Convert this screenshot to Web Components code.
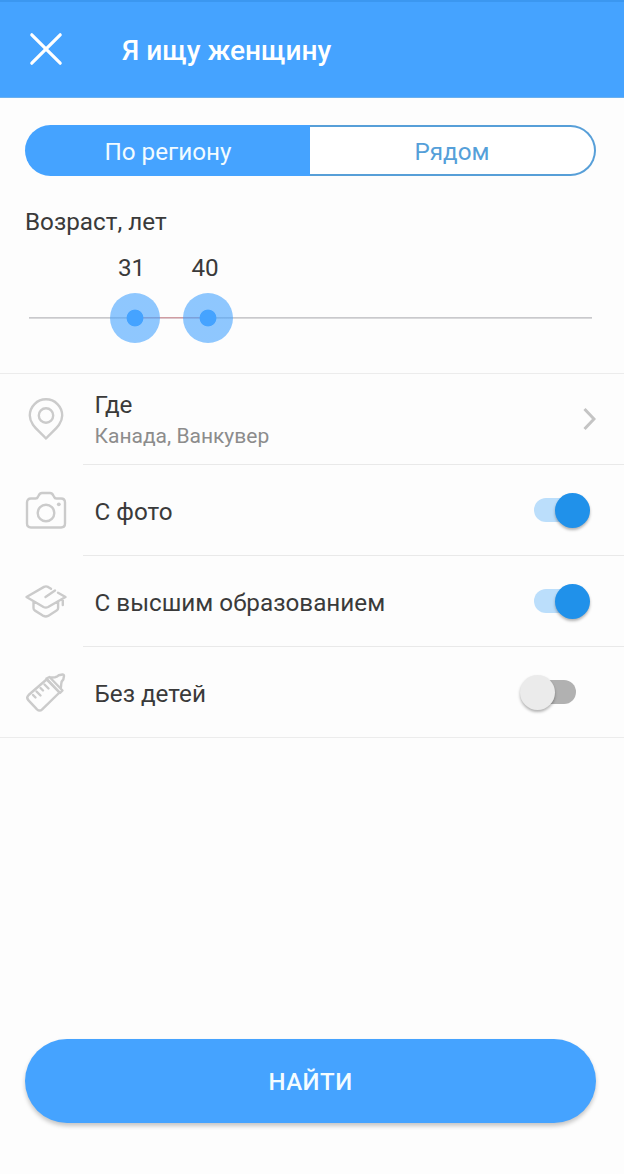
<!DOCTYPE html>
<html lang="ru">
<head>
<meta charset="utf-8">
<meta name="viewport" content="width=device-width, initial-scale=1">
<title>Я ищу женщину</title>
<style>
  body {
    margin: 0;
    background: #fdfdfd;
    color: #3a3a3a;
    font-family: Roboto, "Liberation Sans", sans-serif;
    font-size: 24.25px;
  }
</style>
</head>
<body>
<search-screen>
  <app-header slot="header">Я ищу женщину</app-header>
  <segment-control>
    <segment-item active>По региону</segment-item>
    <segment-item>Рядом</segment-item>
  </segment-control>
  <age-range from="31" to="40" min="18" max="87">Возраст, лет</age-range>
  <filter-list>
    <filter-row icon="pin">Где<span slot="hint">Канада, Ванкувер</span><chevron-icon slot="control"></chevron-icon></filter-row>
    <filter-row icon="camera">С фото<toggle-switch slot="control" on></toggle-switch></filter-row>
    <filter-row icon="cap">С высшим образованием<toggle-switch slot="control" on></toggle-switch></filter-row>
    <filter-row icon="bottle">Без детей<toggle-switch slot="control"></toggle-switch></filter-row>
  </filter-list>
  <find-button slot="footer">НАЙТИ</find-button>
</search-screen>

<script>
class BaseElement extends HTMLElement {
  constructor() {
    super();
    const template = document.createElement('template');
    template.innerHTML = this.constructor.markup;
    this.attachShadow({ mode: 'open' });
    this.shadowRoot.appendChild(template.content.cloneNode(true));
  }
}

class SearchScreen extends BaseElement {
  static markup = `
    <style>
      :host {
        display: flex;
        flex-direction: column;
        height: 100vh;
        min-height: 1174px;
      }
      main { flex: 1; }
      footer { padding: 0 28px 51px 25px; }
    </style>
    <slot name="header"></slot>
    <main><slot></slot></main>
    <footer><slot name="footer"></slot></footer>
  `;
}

class AppHeader extends BaseElement {
  static markup = `
    <style>
      :host {
        display: flex;
        align-items: center;
        box-sizing: border-box;
        height: 98px;
        padding: 0 28px 2px;
        gap: 58px;
        border-top: 2px solid #3b97f0;
        border-bottom: 1px solid #6bb0ee;
        background: #45a3ff;
        color: #fff;
      }
      svg { width: 36px; height: 36px; flex: none; }
      h1 { margin: 5px 0 0; font-size: 28.1px; font-weight: 500; line-height: 34px; }
    </style>
    <svg viewBox="0 0 36 36" fill="none" stroke="#fff" stroke-width="3.2" stroke-linecap="round">
      <path d="M3.8 3.8L32.2 32.2M32.2 3.8L3.8 32.2"/>
    </svg>
    <h1><slot></slot></h1>
  `;
}

class SegmentControl extends BaseElement {
  static markup = `
    <style>
      :host {
        display: flex;
        box-sizing: border-box;
        height: 51px;
        margin: 27px 28px 0 25px;
      }
      ::slotted(:first-child) { border-radius: 26px 0 0 26px; }
      ::slotted(:last-child) { border-radius: 0 26px 26px 0; }
    </style>
    <slot></slot>
  `;
}

class SegmentItem extends BaseElement {
  static markup = `
    <style>
      :host {
        display: flex;
        flex: 1;
        align-items: center;
        justify-content: center;
        box-sizing: border-box;
        padding-top: 3px;
        border: 2px solid #579fd8;
        border-left: none;
        background: #fff;
        color: #559fd9;
      }
      :host([active]) {
        padding-left: 1px;
        border: none;
        background: #45a3ff;
        color: #f2fbff;
      }
    </style>
    <slot></slot>
  `;
}

class AgeRange extends BaseElement {
  static markup = `
    <style>
      :host { display: block; height: 197px; box-sizing: border-box; padding: 32px 32px 0 25px; }
      .label { line-height: 28px; }
      .track {
        position: relative;
        height: 2px;
        margin: 81px 0 0 4px;
        background: linear-gradient(#c9c9cc 50%, #d9d9db 50%);
      }
      .between { position: absolute; top: 0; height: 2px; background: linear-gradient(#d09da2 50%, #dcc6cc 50%); }
      .thumb {
        position: absolute;
        top: 50%;
        width: 50px;
        height: 50px;
        margin: -25.5px 0 0 -25.3px;
        border-radius: 50%;
        background: radial-gradient(circle, #45a3ff 8px, rgba(69, 163, 255, 0.6) 8.8px);
      }
      .value {
        position: absolute;
        bottom: 100%;
        left: 50%;
        margin: 0 0 10px -3.2px;
        transform: translateX(-50%);
        line-height: 30px;
      }
    </style>
    <div class="label"><slot></slot></div>
    <div class="track">
      <div class="between"></div>
      <div class="thumb"><span class="value"></span></div>
      <div class="thumb"><span class="value"></span></div>
    </div>
  `;

  connectedCallback() {
    const min = Number(this.getAttribute('min'));
    const max = Number(this.getAttribute('max'));
    const ages = [this.getAttribute('from'), this.getAttribute('to')];
    const places = ages.map((age) => ((age - min) / (max - min)) * 100);
    this.shadowRoot.querySelectorAll('.thumb').forEach((thumb, i) => {
      thumb.style.left = places[i] + '%';
      thumb.querySelector('.value').textContent = ages[i];
    });
    const between = this.shadowRoot.querySelector('.between');
    between.style.left = places[0] + '%';
    between.style.width = places[1] - places[0] + '%';
  }
}

class FilterList extends BaseElement {
  static markup = `
    <style>
      :host { display: block; border-top: 1px solid #ececec; border-bottom: 1px solid #ececec; }
      ::slotted(:last-child) { --divider: transparent; margin-bottom: -1px; }
    </style>
    <slot></slot>
  `;
}

const icons = {
  pin: `<path d="M22 40.5C15 32.5 5.8 27 5.8 17.5a16.2 16.2 0 0 1 32.4 0C38.2 27 29 32.5 22 40.5Z"/><circle cx="22" cy="17.5" r="7.2"/>`,
  camera: `<path d="M7 9.5h4.5q1.800 0 2.500-1.800l.7-1.200Q15.800 4 18 4h8q2.200 0 3.300 2.500l.7 1.200q.7 1.800 2.500 1.800H37q4 0 4 4V34.500q0 4-4 4H7q-4 0-4-4V13.500q0-4 4-4Z"/><circle cx="22" cy="24" r="8.300"/><circle cx="34.800" cy="15.300" r="1.900" fill="#cbcbcb" stroke="none"/>`,
  cap: `<path d="M27 8.800L24 6.900q-2-1-4 0L2.500 17L19.500 27q2.300 1.200 4.600 0L41.500 17L34 12.700M21.500 17L31 10.500M9.500 21.300v6.700q0 1.700 1.500 2.600l8.500 5.300q2.300 1.200 4.600 0l8.500-5.300q1.500-.9 1.500-2.600v-6.700M38.800 18.500v6.500"/>`,
  bottle: `<path d="M22.500 8.500L4.600 24q-2.600 2.500-.3 5.200L13 38.300q2.700 2.500 5.200 0L35.500 21.500L22.500 8.500Z"/><path d="M22.500 7.500l3-1.500L38.500 19.500L36 22Z"/><path d="M27 6.500L31 6.300Q33.500 5.800 34.700 4.200L38.500 3.500q1.500-.1 1.500 1.500L39.300 8.500q-2 1.800-2 4l-.4 4"/><path d="M20.500 13.500l4 4M16.500 17l2.500 2.500M12.500 20.500l4 4M9 24l2.500 2.500"/>`
};

class FilterRow extends BaseElement {
  static markup = `
    <style>
      :host {
        display: flex;
        align-items: center;
        height: 91px;
        padding-left: 24px;
        gap: 15px;
      }
      svg { width: 44px; height: 44px; flex: none; }
      .body {
        display: flex;
        flex: 1;
        align-items: center;
        justify-content: space-between;
        align-self: stretch;
        padding: 0 28px 0 11.5px;
        border-bottom: 1px solid var(--divider, #e9e9e9);
      }
      .text { display: flex; flex-direction: column; gap: 2px; line-height: 29px; padding-top: 4px; }
      ::slotted([slot="hint"]) { color: #8c8c8c; font-size: 21px; }
    </style>
    <svg viewBox="0 0 44 44" fill="none" stroke="#cbcbcb" stroke-width="2.4" stroke-linecap="round" stroke-linejoin="round"></svg>
    <div class="body">
      <div class="text"><div><slot></slot></div><slot name="hint"></slot></div>
      <slot name="control"></slot>
    </div>
  `;

  connectedCallback() {
    this.shadowRoot.querySelector('svg').innerHTML = icons[this.getAttribute('icon')];
  }
}

class ChevronIcon extends BaseElement {
  static markup = `
    <style>
      :host { display: block; width: 16px; height: 24px; }
      svg { display: block; }
    </style>
    <svg width="16" height="24" viewBox="0 0 16 24" fill="none" stroke="#c4c4c4" stroke-width="3">
      <path d="M4.5 2L14 12L4.5 22"/>
    </svg>
  `;
}

class ToggleSwitch extends BaseElement {
  static markup = `
    <style>
      :host {
        display: flex;
        align-items: center;
        width: 56px;
        height: 35px;
        margin-right: 20px;
      }
      .track {
        flex: none;
        width: 42px;
        height: 24px;
        border-radius: 12px;
        margin-left: 14px;
        background: #b1b1b1;
      }
      /* the knob overlaps the end of the track */
      .knob {
        flex: none;
        width: 35px;
        height: 35px;
        margin-left: -56px;
        border-radius: 50%;
        background: #ebebeb;
        box-shadow: 0 2px 3px rgba(0, 0, 0, 0.3);
      }
      :host([on]) { margin-right: 6px; }
      :host([on]) .track { margin-left: 0; background: #bbdefb; }
      :host([on]) .knob { margin-left: -21px; background: #2091ea; }
    </style>
    <div class="track"></div>
    <div class="knob"></div>
  `;
}

class FindButton extends BaseElement {
  static markup = `
    <style>
      :host { display: block; }
      button {
        display: block;
        width: 100%;
        height: 84px;
        padding: 2px 0 0;
        border: none;
        border-radius: 42px;
        background: #45a3ff;
        box-shadow: 0 3px 4px rgba(0, 0, 0, 0.22);
        color: #f4fcff;
        font: 500 24px Roboto, "Liberation Sans", sans-serif;
        letter-spacing: 0.5px;
      }
    </style>
    <button><slot></slot></button>
  `;
}

customElements.define('search-screen', SearchScreen);
customElements.define('app-header', AppHeader);
customElements.define('segment-control', SegmentControl);
customElements.define('segment-item', SegmentItem);
customElements.define('age-range', AgeRange);
customElements.define('filter-list', FilterList);
customElements.define('filter-row', FilterRow);
customElements.define('chevron-icon', ChevronIcon);
customElements.define('toggle-switch', ToggleSwitch);
customElements.define('find-button', FindButton);
</script>
</body>
</html>
